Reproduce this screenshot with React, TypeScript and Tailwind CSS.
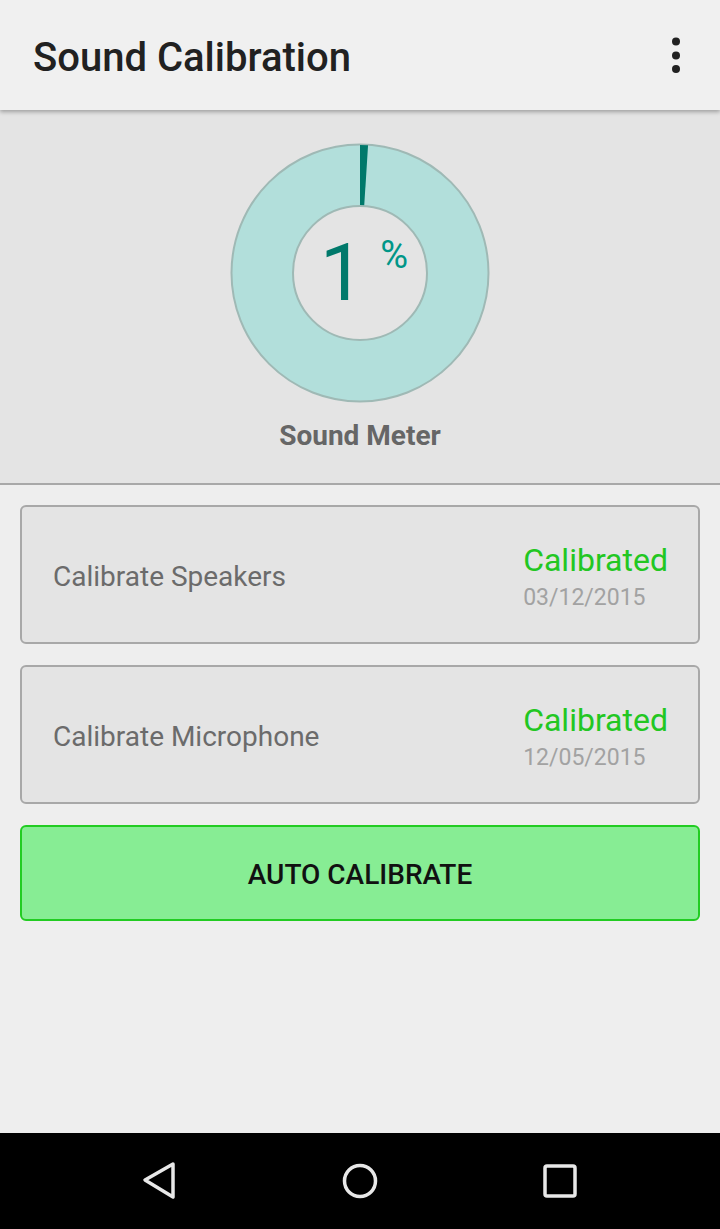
type CalibrationItem = {
  label: string;
  status: string;
  date: string;
};

const items: CalibrationItem[] = [
  { label: "Calibrate Speakers", status: "Calibrated", date: "03/12/2015" },
  { label: "Calibrate Microphone", status: "Calibrated", date: "12/05/2015" },
];

function wedgePath(percent: number, r: number, c: number) {
  const a = (percent / 100) * Math.PI * 2;
  const x = c + r * Math.sin(a);
  const y = c - r * Math.cos(a);
  return `M${c},${c} L${c},${c - r} A${r},${r} 0 0 1 ${x.toFixed(2)},${y.toFixed(2)} Z`;
}

function SoundMeter({ percent }: { percent: number }) {
  return (
    <div className="relative h-[260px] w-[260px]">
      <svg width="260" height="260" viewBox="0 0 260 260">
        <circle cx="130" cy="130" r="128.5" fill="#b2dfdb" stroke="#9fb9b5" strokeWidth="2" />
        <path d={wedgePath(percent, 128, 130)} fill="#00796b" />
        <circle cx="130" cy="130" r="67" fill="#e4e4e4" stroke="#9fb9b5" strokeWidth="2" />
      </svg>
      <div className="absolute inset-0 flex items-center justify-center">
        <span className="ml-[8px] text-[79px] leading-none text-[#00796b]">{percent}</span>
        <span className="mb-[36px] ml-[16px] text-[38px] leading-none text-[#009688]">%</span>
      </div>
    </div>
  );
}

function CalibrationCard({ item }: { item: CalibrationItem }) {
  return (
    <div className="flex h-[139px] items-center justify-between rounded-[6px] border-2 border-[#a8a8a8] bg-[#e4e4e4] pl-[31px] pr-[30px]">
      <span className="pt-[5px] text-[28px] text-[#6b6b6b]">{item.label}</span>
      <div className="flex flex-col items-start pt-[9px]">
        <span className="text-[32px] leading-[38px] text-[#22c722]">{item.status}</span>
        <span className="text-[23px] leading-[38px] text-[#a2a2a2]">{item.date}</span>
      </div>
    </div>
  );
}

export default function App() {
  return (
    <div
      className="flex h-[1229px] w-[720px] flex-col bg-[#eeeeee]"
      style={{ fontFamily: "Roboto, 'Liberation Sans', sans-serif" }}
    >
      <header className="relative z-10 flex h-[110px] shrink-0 items-center justify-between bg-[#f0f0f0] pl-[33px] pr-[39px] shadow-[0_2px_4px_rgba(0,0,0,0.3)]">
        <h1 className="pt-[5px] text-[40px] font-medium text-[#212121]">Sound Calibration</h1>
        <svg width="10" height="36" viewBox="0 0 10 36">
          <circle cx="5" cy="4.5" r="4" fill="#212121" />
          <circle cx="5" cy="18.5" r="4" fill="#212121" />
          <circle cx="5" cy="32" r="4" fill="#212121" />
        </svg>
      </header>

      <section className="flex h-[375px] shrink-0 flex-col items-center border-b-2 border-[#a8a8a8] bg-[#e4e4e4] pt-[33px]">
        <SoundMeter percent={1} />
        <p className="mt-[12px] text-[28px] font-bold text-[#666666]">Sound Meter</p>
      </section>

      <main className="flex flex-1 flex-col gap-[21px] px-[20px] pt-[20px]">
        {items.map((item) => (
          <CalibrationCard key={item.label} item={item} />
        ))}
        <button className="flex h-[96px] items-center justify-center rounded-[6px] border-2 border-[#22cc22] bg-[#87ed94] pt-[4px] text-[28px] font-medium text-[#111111]">
          AUTO CALIBRATE
        </button>
      </main>

      <nav className="flex h-[96px] shrink-0 items-center justify-around bg-black px-[60px]">
        <svg width="40" height="40" viewBox="0 0 40 40">
          <path d="M33 3 L5 19 L33 36 Z" fill="none" stroke="#e8e8e8" strokeWidth="3.5" strokeLinejoin="round" />
        </svg>
        <svg width="40" height="40" viewBox="0 0 40 40">
          <circle cx="20" cy="20" r="15.5" fill="none" stroke="#e8e8e8" strokeWidth="3.5" />
        </svg>
        <svg width="40" height="40" viewBox="0 0 40 40">
          <rect x="5" y="5" width="30" height="30" rx="2" fill="none" stroke="#e8e8e8" strokeWidth="3.5" />
        </svg>
      </nav>
    </div>
  );
}
